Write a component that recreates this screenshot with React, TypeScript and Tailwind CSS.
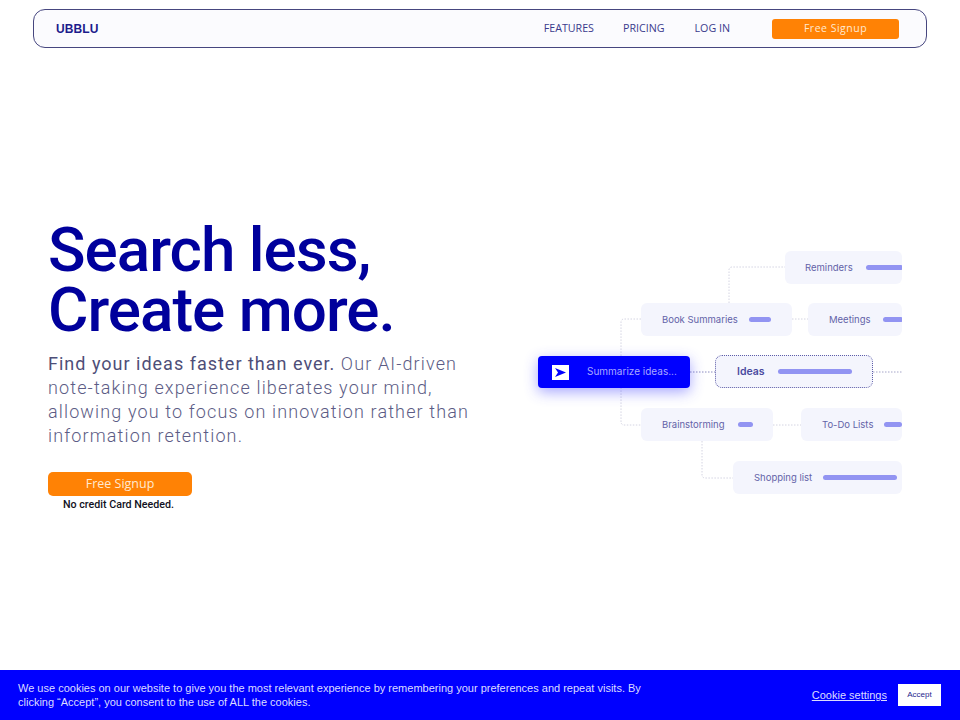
const Bar = ({ w }: { w: number }) => (
  <span className="block h-[5px] shrink-0 rounded-full bg-[#9294f2]" style={{ width: w }} />
);

function Node({ label, bar, left, top, width, gap, pad }: { label: string; bar: number; left: number; top: number; width: number; gap: number; pad: number }) {
  return (
    <div
      className="absolute flex h-[33px] items-center overflow-hidden rounded-[6px] bg-[#f4f5fd] text-[9.5px] text-[#6363a8]"
      style={{ left, top, width, paddingLeft: pad, gap }}
    >
      <span className="whitespace-nowrap pt-px">{label}</span>
      <Bar w={bar} />
    </div>
  );
}

function Diagram() {
  return (
    <div className="relative h-[250px] w-[372px] shrink-0 font-['Inter',sans-serif]">
      <svg className="absolute left-0 top-0" width="372" height="250" fill="none" stroke="#d4d4e2" strokeWidth="1" strokeDasharray="1.5 1.5">
        <path d="M111 69H94a3 3 0 0 0-3 3V172a3 3 0 0 0 3 3H111" />
        <path d="M199 53V20a3 3 0 0 1 3-3H255" />
        <path d="M262 69H278" />
        <path d="M243 175H271" />
        <path d="M172 191V225a3 3 0 0 0 3 3H203" />
        <path d="M160 122H185" stroke="#8c8cc0" />
        <path d="M343 122H372" stroke="#a5a5c8" />
      </svg>
      <Node label="Reminders" bar={37} left={255} top={1} width={117} gap={13} pad={20} />
      <Node label="Book Summaries" bar={22} left={111} top={53} width={151} gap={11} pad={21} />
      <Node label="Meetings" bar={20} left={278} top={53} width={94} gap={12} pad={21} />
      <div className="absolute left-[8px] top-[106px] flex h-[32px] w-[152px] items-center rounded-[4px] bg-[#0000ff] pl-[14px] text-[10px] text-[#a9a9ff] shadow-[0_4px_14px_rgba(60,60,255,0.45)]">
        <span className="flex h-[15px] w-[17px] items-center justify-center bg-white">
          <svg width="11" height="9" viewBox="0 0 11 9"><path d="M0 0L11 4.5L0 9L3 4.5Z" fill="#0000ff" /></svg>
        </span>
        <span className="ml-[18px] whitespace-nowrap pb-px">Summarize ideas...</span>
      </div>
      <div className="absolute left-[185px] top-[105px] flex h-[33px] w-[158px] items-center gap-[13px] rounded-[7px] border border-dotted border-[#5d5da8] bg-[#f4f5fd] pl-[21px] text-[10.5px] font-semibold text-[#4a4aa0]">
        <span>Ideas</span>
        <Bar w={74} />
      </div>
      <Node label="Brainstorming" bar={15} left={111} top={158} width={132} gap={13} pad={21} />
      <Node label="To-Do Lists" bar={18} left={271} top={158} width={101} gap={11} pad={21} />
      <Node label="Shopping list" bar={74} left={203} top={211} width={169} gap={11} pad={21} />
    </div>
  );
}

export default function App() {
  return (
    <div className="relative h-[720px] overflow-hidden bg-white">
      <header className="mx-[33px] mt-[9px] flex h-[39px] items-center rounded-[12px] border border-[#46467f] bg-[#fbfbfe] pl-[22px] pr-[27px]">
        <span className="font-['Liberation_Sans',sans-serif] text-[12px] font-bold tracking-[0.1px] text-[#1c1c8c]">UBBLU</span>
        <nav className="ml-auto flex items-center font-['Open_Sans',sans-serif] text-[10.7px] font-medium text-[#3a3a8c]">
          <a>FEATURES</a>
          <a className="ml-[29px]">PRICING</a>
          <a className="ml-[30px]">LOG IN</a>
          <a className="ml-[42px] flex h-[20px] w-[127px] items-center justify-center rounded-[3px] bg-[#ff8205] text-[10.5px] tracking-[0.5px] text-[#ffe9d2]">Free Signup</a>
        </nav>
      </header>

      <main className="ml-[48px] mr-[58px] mt-[174px] flex items-start justify-between">
        <section className="w-[430px]">
          <h1 className="-mt-[2px] font-['Roboto',sans-serif] text-[62px] font-medium leading-[60px] tracking-[-1px] text-[#00009c]">
            Search less,
            <br />
            Create more.
          </h1>
          <p className="mt-[12px] font-['Roboto',sans-serif] text-[18px] font-light leading-[24px] tracking-[1.13px] text-[#5c5c85]">
            <span className="font-normal tracking-[1px] text-[#4e4e78]">Find your ideas faster than ever.</span> Our AI-driven note-taking experience liberates your mind, allowing you to focus on innovation rather than information retention.
          </p>
          <a className="mt-[24px] flex h-[24px] w-[144px] items-center justify-center rounded-[5px] bg-[#ff8205] font-['Open_Sans',sans-serif] text-[12.5px] text-[#ffe9d2]">Free Signup</a>
          <p className="w-[141px] text-center font-['Roboto',sans-serif] text-[10.7px] font-medium leading-[17px] text-[#111122]">No credit Card Needed.</p>
        </section>
        <div className="mt-[28px]">
          <Diagram />
        </div>
      </main>

      <div className="fixed bottom-0 left-0 right-0 flex h-[50px] items-center bg-[#0000ff] pl-[18px] pr-[19px] font-['Liberation_Sans',sans-serif] text-[11px] leading-[14px] text-[#dcdcff]">
        <p className="w-[640px]">We use cookies on our website to give you the most relevant experience by remembering your preferences and repeat visits. By clicking “Accept”, you consent to the use of ALL the cookies.</p>
        <a className="ml-auto underline">Cookie settings</a>
        <a className="ml-[11px] flex h-[22px] w-[43px] items-center justify-center bg-white text-[8px] text-[#26268c]">Accept</a>
      </div>
    </div>
  );
}
